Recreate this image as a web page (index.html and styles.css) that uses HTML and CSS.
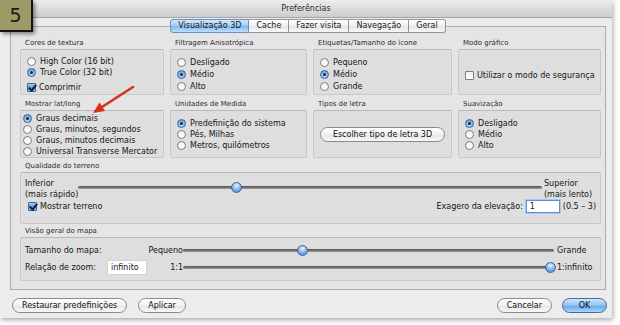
FILE: index.html
```html
<!DOCTYPE html>
<html lang="pt">
<head>
    <meta charset="UTF-8">
    <meta name="viewport" content="width=device-width, initial-scale=1.0">
    <title>Preferências</title>
    <link rel="stylesheet" href="styles.css">
</head>
<body>
    <div class="badge">5</div>

    <div class="window">
        <div class="titlebar">Preferências</div>

        <div class="panel">
            <div class="tabs">
                <span class="tab active">Visualização 3D</span>
                <span class="tab">Cache</span>
                <span class="tab">Fazer visita</span>
                <span class="tab">Navegação</span>
                <span class="tab">Geral</span>
            </div>

            <div class="row row-one">
                <div class="group">
                    <div class="glabel">Cores de textura</div>
                    <div class="gbox cores">
                        <div class="opt"><span class="radio"></span>High Color (16 bit)</div>
                        <div class="opt"><span class="radio on"></span>True Color (32 bit)</div>
                        <div class="opt gap"><span class="check on"></span>Comprimir</div>
                    </div>
                </div>
                <div class="group">
                    <div class="glabel">Filtragem Anisotrópica</div>
                    <div class="gbox tall">
                        <div class="opt"><span class="radio"></span>Desligado</div>
                        <div class="opt"><span class="radio on"></span>Médio</div>
                        <div class="opt"><span class="radio"></span>Alto</div>
                    </div>
                </div>
                <div class="group">
                    <div class="glabel">Etiquetas/Tamanho do ícone</div>
                    <div class="gbox tall">
                        <div class="opt"><span class="radio"></span>Pequeno</div>
                        <div class="opt"><span class="radio on"></span>Médio</div>
                        <div class="opt"><span class="radio"></span>Grande</div>
                    </div>
                </div>
                <div class="group">
                    <div class="glabel">Modo gráfico</div>
                    <div class="gbox modo">
                        <div class="opt"><span class="check"></span>Utilizar o modo de segurança</div>
                    </div>
                </div>
            </div>

            <div class="row row-two">
                <div class="group">
                    <div class="glabel">Mostrar lat/long</div>
                    <div class="gbox latlong">
                        <div class="opt"><span class="radio on"></span>Graus decimais</div>
                        <div class="opt"><span class="radio"></span>Graus, minutos, segundos</div>
                        <div class="opt"><span class="radio"></span>Graus, minutos decimais</div>
                        <div class="opt"><span class="radio"></span>Universal Transverse Mercator</div>
                    </div>
                </div>
                <div class="group">
                    <div class="glabel">Unidades de Medida</div>
                    <div class="gbox spaced">
                        <div class="opt"><span class="radio on"></span>Predefinição do sistema</div>
                        <div class="opt"><span class="radio"></span>Pés, Milhas</div>
                        <div class="opt"><span class="radio"></span>Metros, quilómetros</div>
                    </div>
                </div>
                <div class="group">
                    <div class="glabel">Tipos de letra</div>
                    <div class="gbox centered">
                        <button class="btn">Escolher tipo de letra 3D</button>
                    </div>
                </div>
                <div class="group">
                    <div class="glabel">Suavização</div>
                    <div class="gbox spaced">
                        <div class="opt"><span class="radio on"></span>Desligado</div>
                        <div class="opt"><span class="radio"></span>Médio</div>
                        <div class="opt"><span class="radio"></span>Alto</div>
                    </div>
                </div>
            </div>

            <div class="group terrain">
                <div class="glabel">Qualidade do terreno</div>
                <div class="gbox">
                    <div class="range-row">
                        <div class="range-end">Inferior<br>(mais rápido)</div>
                        <div class="slider"><span class="track"></span><span class="thumb" style="left: 34%"></span></div>
                        <div class="range-end right">Superior<br>(mais lento)</div>
                    </div>
                    <div class="terrain-foot">
                        <div class="opt"><span class="check on"></span>Mostrar terreno</div>
                        <div class="exag">
                            Exagero da elevação:
                            <span class="field focus">1</span>
                            (0.5 – 3)
                        </div>
                    </div>
                </div>
            </div>

            <div class="group overview">
                <div class="glabel">Visão geral do mapa</div>
                <div class="gbox">
                    <div class="map-grid">
                        <span class="wide">Tamanho do mapa:</span>
                        <span class="min">Pequeno</span>
                        <div class="slider"><span class="track"></span><span class="thumb" style="left: 32%"></span></div>
                        <span class="max">Grande</span>

                        <span>Relação de zoom:</span>
                        <span class="field">infinito</span>
                        <span class="min">1:1</span>
                        <div class="slider"><span class="track"></span><span class="thumb" style="left: 99%"></span></div>
                        <span class="max">1:infinito</span>
                    </div>
                </div>
            </div>
        </div>

        <div class="footer">
            <button class="btn">Restaurar predefinições</button>
            <button class="btn">Aplicar</button>
            <button class="btn push">Cancelar</button>
            <button class="btn primary">OK</button>
        </div>
    </div>

    <svg class="arrow" width="50" height="36" viewBox="0 0 50 36">
        <line x1="45" y1="5" x2="14" y2="25" stroke="#d8321f" stroke-width="2.6" stroke-linecap="round" />
        <polygon points="5,31 17,29 11.5,20.5" fill="#d8321f" />
    </svg>
</body>
</html>
```

FILE: styles.css
```css
* {
    box-sizing: border-box;
}

body {
    margin: 0;
    background-color: #ffffff;
    font-family: "DejaVu Sans", sans-serif;
    font-size: 8px;
    color: #151515;
    position: relative;
    width: 620px;
    height: 325px;
    overflow: hidden;
}

.window {
    width: 612px;
    height: 318px;
    background-color: #ececec;
    box-shadow: 1px 2px 5px rgba(0, 0, 0, 0.35);
    display: flex;
    flex-direction: column;
}

.titlebar {
    height: 18px;
    line-height: 17px;
    text-align: center;
    color: #2a2a2a;
    background: linear-gradient(#ededed, #cdcdcd);
    border-bottom: 1px solid #a4a4a4;
}

.panel {
    margin: 8px 6px 0 10px;
    padding: 0 4px 8px 9px;
    border: 1px solid #adadad;
    background-color: #e5e5e5;
}

.tabs {
    display: flex;
    justify-content: center;
    margin: -8px 5px 5px 0;
}

.tab {
    height: 14px;
    line-height: 12px;
    padding: 0 7px;
    border: 1px solid #959595;
    border-left: none;
    background: linear-gradient(#ffffff, #f0f0f0 50%, #e6e6e6 51%, #f7f7f7);
    color: #1a1a1a;
}

.tab:first-child {
    border-left: 1px solid #6d8fbd;
    border-radius: 3px 0 0 3px;
}

.tab:last-child {
    border-radius: 0 3px 3px 0;
}

.tab.active {
    border-color: #6d8fbd;
    background: linear-gradient(#d4e9fb, #9ccaf3 50%, #7fb7ec 51%, #bfe0fb);
}

.row {
    display: grid;
    grid-template-columns: 144px 137px 139px 143px;
    column-gap: 6px;
}

.row-two {
    margin-top: 4px;
}

.glabel {
    height: 11px;
    line-height: 11px;
    font-size: 7px;
    padding-left: 5px;
    color: #2c2c2c;
}

.gbox {
    border: 1px solid #c8c8c8;
    border-top-color: #b9b9b9;
    border-radius: 2px;
    background-color: #dedede;
    padding-left: 6px;
}

.row-one .gbox {
    height: 46px;
    padding-top: 6px;
}

.row-two .gbox {
    height: 48px;
}

.opt {
    display: flex;
    align-items: center;
    height: 11px;
    white-space: nowrap;
}

.gbox.tall .opt {
    height: 12px;
}

.opt.gap {
    margin-top: 4px;
}

.gbox.modo {
    padding-top: 20px;
}

.gbox.latlong {
    padding: 2px 0 0 2px;
}

.gbox.spaced {
    padding-top: 7px;
}

.gbox.centered {
    display: flex;
    align-items: center;
    justify-content: center;
    padding-left: 0;
}

.radio {
    flex: none;
    width: 9px;
    height: 9px;
    margin-right: 4px;
    border: 1px solid #7d7d7d;
    border-radius: 50%;
    background: linear-gradient(#f2f2f2, #ffffff);
    display: flex;
    align-items: center;
    justify-content: center;
}

.radio.on {
    border-color: #3c639a;
    background: radial-gradient(circle at 50% 70%, #c4e2fb, #6ea8e2 70%, #4f88c8);
}

.radio.on::after {
    content: "";
    width: 3px;
    height: 3px;
    border-radius: 50%;
    background-color: #13284a;
}

.check {
    flex: none;
    width: 9px;
    height: 9px;
    margin-right: 3px;
    border: 1px solid #7d7d7d;
    border-radius: 1px;
    background: linear-gradient(#f2f2f2, #ffffff);
    position: relative;
}

.check.on {
    border-color: #3c639a;
    background: linear-gradient(#a8d0f6, #5f9ddd 50%, #8cc2f2);
}

.check.on::after {
    content: "";
    position: absolute;
    left: 2px;
    top: -1px;
    width: 3px;
    height: 6px;
    border: solid #10203c;
    border-width: 0 2px 2px 0;
    transform: rotate(40deg);
}

.terrain {
    margin-top: 3px;
}

.terrain .gbox {
    height: 52px;
    padding: 5px 4px 0 4px;
}

.range-row {
    display: flex;
    align-items: flex-start;
}

.range-end {
    line-height: 11px;
    white-space: nowrap;
}

.range-end.right {
    width: 52px;
    margin-left: 2px;
}

.slider {
    flex: 1;
    position: relative;
    height: 11px;
    margin-top: 4px;
}

.map-grid .slider {
    margin-top: 0;
}

.track {
    position: absolute;
    left: 0;
    right: 0;
    top: 4px;
    height: 3px;
    border-radius: 2px;
    background: linear-gradient(#4f4f4f, #9b9b9b);
}

.thumb {
    position: absolute;
    top: 0;
    width: 11px;
    height: 11px;
    margin-left: -5px;
    border: 1px solid #3f6597;
    border-radius: 50%;
    background: radial-gradient(circle at 50% 30%, #eef6fe, #8cbcec 45%, #3f7fc8);
}

.terrain-foot {
    display: flex;
    align-items: center;
    height: 13px;
}

.terrain-foot .opt {
    margin-left: 3px;
}

.exag {
    margin-left: auto;
    display: flex;
    align-items: center;
    white-space: nowrap;
}

.field {
    display: inline-block;
    height: 15px;
    line-height: 13px;
    padding-left: 3px;
    background-color: #ffffff;
    border: 1px solid #d2d2d2;
}

.exag .field {
    width: 34px;
    height: 13px;
    line-height: 11px;
    margin: 0 3px;
}

.field.focus {
    border-color: #5f8fd0;
    box-shadow: 0 0 0 1px #a4c8f0;
}

.overview {
    margin-top: 2px;
}

.overview .gbox {
    height: 44px;
    padding: 6px 4px 0 4px;
}

.map-grid {
    display: grid;
    grid-template-columns: 82px 40px 36px 1fr 42px;
    grid-template-rows: 12px 13px;
    row-gap: 5px;
    align-items: center;
    white-space: nowrap;
}

.map-grid .wide {
    grid-column: span 2;
}

.map-grid .min {
    text-align: right;
}

.map-grid .max {
    padding-left: 3px;
}

.footer {
    display: flex;
    gap: 11px;
    margin-top: 8px;
    padding: 0 5px 0 12px;
}

.btn {
    height: 15px;
    padding: 0 9px;
    font: inherit;
    line-height: 13px;
    color: #111111;
    border: 1px solid #8a8a8a;
    border-radius: 8px;
    background: linear-gradient(#ffffff, #f1f1f1 50%, #e4e4e4 51%, #f8f8f8);
    white-space: nowrap;
}

.gbox .btn {
    padding: 0 12px;
}

.btn.push {
    margin-left: auto;
}

.btn.primary {
    min-width: 45px;
    margin-left: -1px;
    border-color: #46699c;
    background: linear-gradient(#cfe6fb, #8fc0f0 50%, #63a5e8 51%, #a9d6fa);
}

.badge {
    position: absolute;
    left: 0;
    top: 0;
    z-index: 2;
    width: 33px;
    height: 32px;
    line-height: 30px;
    text-align: center;
    font-size: 19px;
    color: #1b1b14;
    background-color: #9e9a68;
    border-right: 2px solid #111111;
    border-bottom: 2px solid #111111;
    box-shadow: 2px 2px 4px rgba(0, 0, 0, 0.45);
}

.arrow {
    position: absolute;
    left: 88px;
    top: 82px;
    z-index: 2;
}
```
